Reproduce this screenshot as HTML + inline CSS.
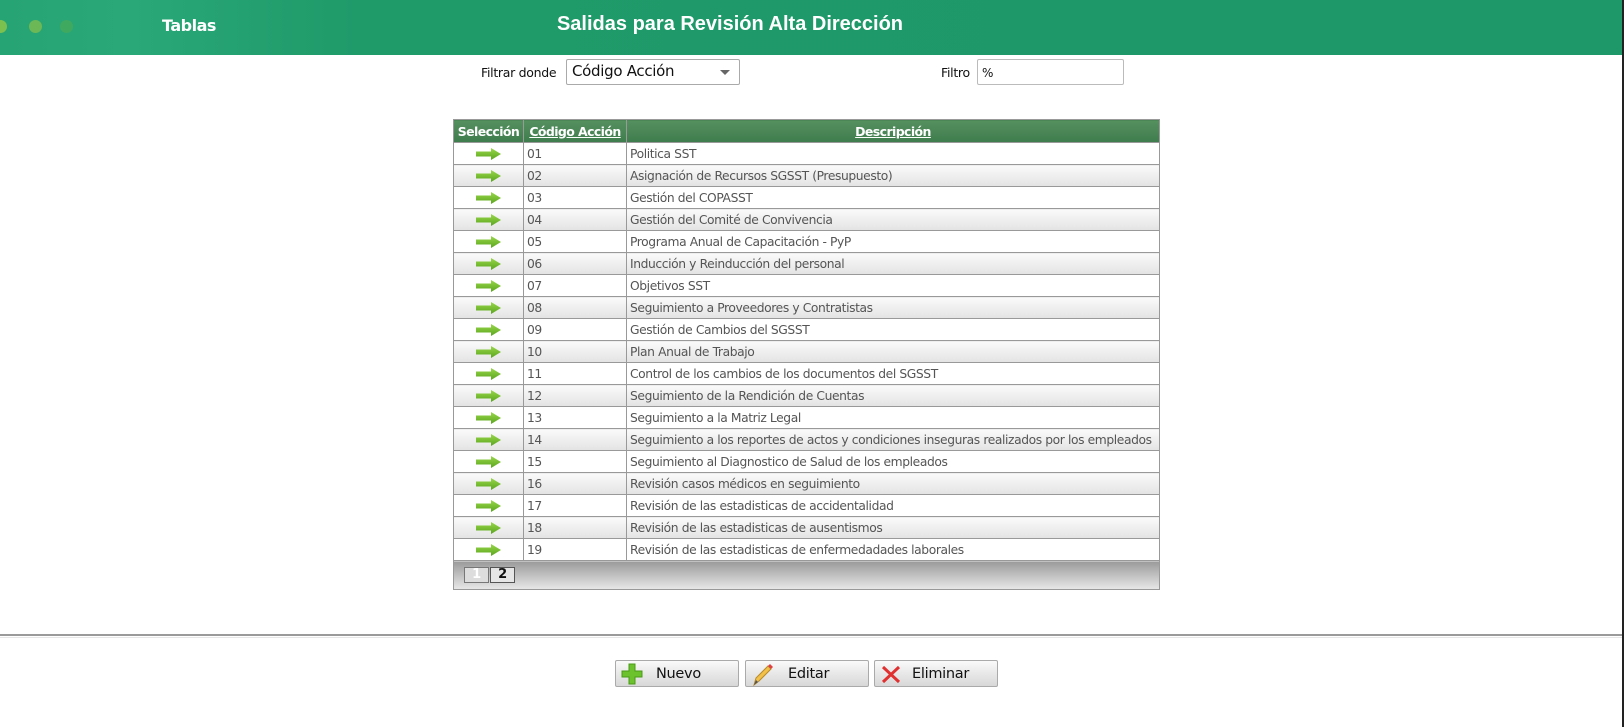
<!DOCTYPE html>
<html><head><meta charset="utf-8"><style>
*{margin:0;padding:0;box-sizing:border-box}
body{width:1624px;height:727px;background:#fff;font-family:"Liberation Sans",sans-serif;position:relative;overflow:hidden}
.hdr{position:absolute;left:0;top:0;width:1622px;height:55px;background:linear-gradient(90deg,#27a473 0%,#2aa878 8%,#1f9a69 22%,#1e9769 100%)}
.rb{position:absolute;right:0;top:0;width:2px;height:727px;background:#222}
.dot{position:absolute;top:20px;width:13px;height:13px;border-radius:50%}
.t1{position:absolute;left:162px;top:16px;color:#fff;font:bold 16px "DejaVu Sans",sans-serif;letter-spacing:-.5px}
.t2{position:absolute;left:0;text-align:center;top:13px;color:#fff;font:bold 20px "Liberation Sans",sans-serif}
.lbl{position:absolute;font:12.5px "DejaVu Sans",sans-serif;color:#111;letter-spacing:-.3px}
.sel{position:absolute;left:566px;top:59px;width:174px;height:26px;border:1px solid #aaa;border-radius:2px;font:15px "DejaVu Sans",sans-serif;padding:2px 5px;color:#111;letter-spacing:-.3px}
.sel:after{content:"";position:absolute;right:9px;top:10px;border:5px solid transparent;border-top:5px solid #666}
.inp{position:absolute;left:977px;top:59px;width:147px;height:26px;border:1px solid #bbb;border-radius:2px;font:12px "DejaVu Sans",sans-serif;padding:6px 4px;color:#111}
table{position:absolute;left:453px;top:119px;width:707px;border-collapse:collapse;border:1px solid #666;table-layout:fixed}
th{height:23px;background:linear-gradient(#55905f,#3f7c4d);color:#fff;font:bold 12.5px "DejaVu Sans",sans-serif;border:1px solid #999;padding:0 2px;text-decoration:underline;white-space:nowrap;letter-spacing:-.6px;overflow:hidden}
th:first-child{text-decoration:none}
td{height:22px;border:1px solid #999;font:12.3px "DejaVu Sans",sans-serif;color:#555;padding:0 3px;white-space:nowrap;letter-spacing:-.4px;overflow:hidden}
tr.a td{background:#fff}
tr.b td{background:linear-gradient(#fafafa,#e3e3e3)}
td.s{text-align:center}
.ar{display:inline-block;vertical-align:middle}
td.pg{height:29px;background:linear-gradient(#9a9a9a,#e8e8e8);padding:0 10px;vertical-align:middle}
.pb{display:inline-block;width:25px;height:16px;border:1px solid #555;text-align:center;font:bold 13px "DejaVu Sans",sans-serif;line-height:14px;margin-right:1px}
.line1{position:absolute;left:0;top:634px;width:1622px;height:2px;background:#9a9a9a}
.line2{position:absolute;left:0;top:637px;width:1622px;height:1px;background:#e6e6e6}
.btn{position:absolute;top:660px;width:124px;height:27px;border:1px solid #aaa;border-radius:2px;background:linear-gradient(#fafafa,#e8e8e8 50%,#d8d8d8);font:14.5px "DejaVu Sans",sans-serif;color:#111;letter-spacing:-.3px}
.btn span{position:absolute;top:5px}
.btn svg{position:absolute;left:5px;top:2px}
</style></head><body>
<div class="hdr">
<div class="dot" style="left:-6px;background:#7cc04f"></div>
<div class="dot" style="left:29px;background:#6cb856"></div>
<div class="dot" style="left:60px;background:#3fa960"></div>
<div class="t1">Tablas</div>
<div class="t2" style="width:1460px">Salidas para Revisión Alta Dirección</div>
</div>
<div class="rb"></div>
<div class="lbl" style="left:481px;top:65px">Filtrar donde</div>
<div class="sel">Código Acción</div>
<div class="lbl" style="left:941px;top:65px">Filtro</div>
<div class="inp">%</div>
<table>
<colgroup><col style="width:70px"><col style="width:103px"><col></colgroup>
<tr><th>Selección</th><th>Código Acción</th><th>Descripción</th></tr>
<tbody id="tb"></tbody>
<tr><td class="pg" colspan="3"><span class="pb" style="background:#ddd;color:#fff;border-color:#777">1</span><span class="pb" style="background:#e6e6e6;color:#111">2</span></td></tr>
</table>
<script>
var d=["Politica SST","Asignación de Recursos SGSST (Presupuesto)","Gestión del COPASST","Gestión del Comité de Convivencia","Programa Anual de Capacitación - PyP","Inducción y Reinducción del personal","Objetivos SST","Seguimiento a Proveedores y Contratistas","Gestión de Cambios del SGSST","Plan Anual de Trabajo","Control de los cambios de los documentos del SGSST","Seguimiento de la Rendición de Cuentas","Seguimiento a la Matriz Legal","Seguimiento a los reportes de actos y condiciones inseguras realizados por los empleados","Seguimiento al Diagnostico de Salud de los empleados","Revisión casos médicos en seguimiento","Revisión de las estadisticas de accidentalidad","Revisión de las estadisticas de ausentismos","Revisión de las estadisticas de enfermedadades laborales"];
var h="",ar='<svg class="ar" width="25" height="12" viewBox="0 0 25 12"><defs><linearGradient id="g" x1="0" y1="0" x2="0" y2="1"><stop offset="0" stop-color="#9ad84a"/><stop offset="1" stop-color="#5aa51e"/></linearGradient></defs><path d="M0 3.5H15V0L25 6L15 12V8.5H0Z" fill="url(#g)"/></svg>';
for(var i=0;i<d.length;i++){var n=(i+1<10?"0":"")+(i+1);h+='<tr class="'+(i%2?"b":"a")+'"><td class="s">'+ar+'</td><td class="c">'+n+'</td><td>'+d[i]+'</td></tr>';}
document.getElementById("tb").innerHTML=h;
</script>
<div class="line1"></div><div class="line2"></div>
<div class="btn" style="left:615px"><svg width="22" height="22" viewBox="0 0 22 22"><path d="M8 1h6v7h7v6h-7v7H8v-7H1V8h7z" fill="#6cc22c" stroke="#4a9a18"/></svg><span style="left:40px">Nuevo</span></div>
<div class="btn" style="left:745px"><svg width="22" height="24" viewBox="0 0 22 24"><path d="M3 22L5 15L17 3L20 6L8 18Z" fill="#f2c14a" stroke="#b88a2a"/><path d="M17 3L19 1L22 4L20 6Z" fill="#e04040"/><path d="M3 22L5 17L7 19Z" fill="#555"/></svg><span style="left:42px">Editar</span></div>
<div class="btn" style="left:874px"><svg width="22" height="22" viewBox="0 0 22 22"><path d="M3 4L19 19M19 4L3 19" stroke="#e03030" stroke-width="3"/></svg><span style="left:37px">Eliminar</span></div>
</body></html>
